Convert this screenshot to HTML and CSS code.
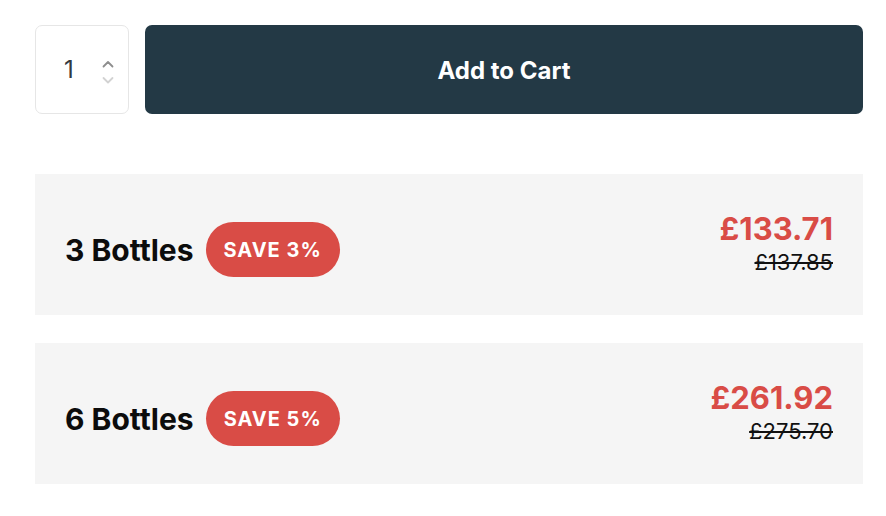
FILE: index.html
```html
<!DOCTYPE html>
<html>
<head>
<meta charset="utf-8">
<link rel="stylesheet" href="styles.css">
</head>
<body>
<div class="wrap">
  <div class="buy-row">
    <div class="qty">
      <span class="qty-val">1</span>
      <span class="spin">
        <svg width="12" height="24" viewBox="0 0 12 24">
          <path d="M1.5 6.5 L6 2 L10.5 6.5" fill="none" stroke="#8e8e8e" stroke-width="1.8" stroke-linecap="round" stroke-linejoin="round"/>
          <path d="M1.5 18 L6 22.5 L10.5 18" fill="none" stroke="#d2d2d2" stroke-width="1.8" stroke-linecap="round" stroke-linejoin="round"/>
        </svg>
      </span>
    </div>
    <button class="add-btn">Add to Cart</button>
  </div>
  <div class="offers">
    <div class="offer">
      <div class="offer-left">
        <span class="offer-name">3 Bottles</span>
        <span class="badge">SAVE 3%</span>
      </div>
      <div class="offer-price">
        <span class="price-now">£133.71</span>
        <span class="price-was">£137.85</span>
      </div>
    </div>
    <div class="offer">
      <div class="offer-left">
        <span class="offer-name">6 Bottles</span>
        <span class="badge">SAVE 5%</span>
      </div>
      <div class="offer-price">
        <span class="price-now">£261.92</span>
        <span class="price-was">£275.70</span>
      </div>
    </div>
  </div>
</div>
</body>
</html>
```

FILE: styles.css
```css
html, body {
  margin: 0;
  padding: 0;
  background: #ffffff;
}
body {
  font-family: Inter, "Noto Sans", sans-serif;
}
.wrap {
  width: 828px;
  padding: 25px 0 0 35px;
}
.buy-row {
  display: flex;
  gap: 16px;
  height: 89px;
}
.qty {
  box-sizing: border-box;
  width: 94px;
  border: 1.5px solid #e6e6e6;
  border-radius: 7px;
  display: flex;
  align-items: center;
  padding-left: 28px;
  gap: 25px;
}
.qty-val {
  font-size: 24px;
  color: #333a40;
  width: 13px;
}
.spin {
  display: flex;
  align-items: center;
  margin-top: 4px;
}
.add-btn {
  flex: 1;
  border: none;
  border-radius: 7px;
  background: #233945;
  color: #ffffff;
  font-family: Inter, "Noto Sans", sans-serif;
  font-weight: 700;
  font-size: 24px;
  padding-top: 3px;
  cursor: pointer;
}
.offers {
  margin-top: 60px;
  display: flex;
  flex-direction: column;
  gap: 28px;
}
.offer {
  height: 141px;
  background: #f5f5f5;
  display: flex;
  align-items: center;
  justify-content: space-between;
  padding: 0 30px;
}
.offer-left {
  display: flex;
  align-items: center;
  gap: 12px;
  margin-top: 10px;
}
.offer-name {
  font-size: 30px;
  font-weight: 700;
  color: #0c0c0c;
}
.badge {
  background: #d94c46;
  color: #ffffff;
  font-size: 20px;
  font-weight: 700;
  letter-spacing: 1px;
  height: 55px;
  padding: 0 18px;
  border-radius: 28px;
  display: flex;
  align-items: center;
}
.offer-price {
  display: flex;
  flex-direction: column;
  align-items: flex-end;
  margin-top: -5px;
}
.price-now {
  font-size: 31px;
  font-weight: 700;
  color: #d94c46;
  line-height: 36px;
}
.price-was {
  font-size: 22px;
  color: #111111;
  text-decoration: line-through;
  line-height: 24px;
  margin-top: 3px;
}
```
